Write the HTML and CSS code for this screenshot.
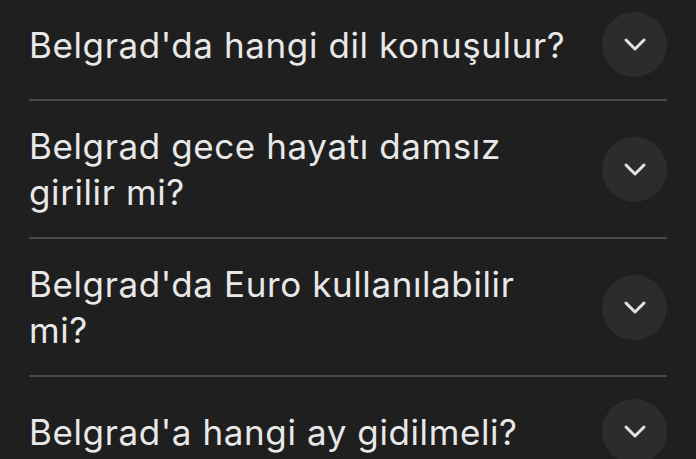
FILE: index.html
```html
<!DOCTYPE html>
<html lang="tr">
<head>
<meta charset="utf-8">
<title>Sık sorulan sorular</title>
<link rel="stylesheet" href="styles.css">
</head>
<body>
<ul class="faq">
  <li class="faq-item">
    <span class="faq-question">Belgrad'da hangi dil konuşulur?</span>
    <button class="faq-toggle" aria-label="Genişlet">
      <svg viewBox="0 0 24 16" width="24" height="16"><polyline points="3,3 12,12 21,3"/></svg>
    </button>
  </li>
  <li class="faq-item">
    <span class="faq-question">Belgrad gece hayatı damsız girilir mi?</span>
    <button class="faq-toggle" aria-label="Genişlet">
      <svg viewBox="0 0 24 16" width="24" height="16"><polyline points="3,3 12,12 21,3"/></svg>
    </button>
  </li>
  <li class="faq-item">
    <span class="faq-question">Belgrad'da Euro kullanılabilir mi?</span>
    <button class="faq-toggle" aria-label="Genişlet">
      <svg viewBox="0 0 24 16" width="24" height="16"><polyline points="3,3 12,12 21,3"/></svg>
    </button>
  </li>
  <li class="faq-item">
    <span class="faq-question">Belgrad'a hangi ay gidilmeli?</span>
    <button class="faq-toggle" aria-label="Genişlet">
      <svg viewBox="0 0 24 16" width="24" height="16"><polyline points="3,3 12,12 21,3"/></svg>
    </button>
  </li>
</ul>
</body>
</html>
```
FILE: styles.css
```css
html, body {
  margin: 0;
  padding: 0;
  background: #1f1f1f;
  height: 100%;
  overflow: hidden;
}

body {
  font-family: Inter, Roboto, sans-serif;
  color: #e8e8e8;
}

/* list is scrolled a little, so the first row sits partly above the top edge */
.faq {
  list-style: none;
  margin: -10px 0 0;
  padding: 0 29px;
}

.faq-item {
  display: flex;
  align-items: center;
  gap: 26px;
  padding: 22px 0;
  border-bottom: 2px solid #4a4a4b;
}

.faq-item:last-child {
  border-bottom: none;
}

.faq-question {
  flex: 1;
  font-size: 35px;
  line-height: 46px;
  font-weight: 400;
  letter-spacing: 0.6px;
}

.faq-toggle {
  flex: none;
  width: 65px;
  height: 65px;
  border: none;
  border-radius: 50%;
  background: #2c2c2e;
  padding: 0;
  display: flex;
  align-items: center;
  justify-content: center;
}

.faq-toggle svg {
  display: block;
  margin-top: 1px;
}

.faq-toggle polyline {
  fill: none;
  stroke: #e3e3e6;
  stroke-width: 3;
  stroke-linecap: round;
  stroke-linejoin: round;
}
```
